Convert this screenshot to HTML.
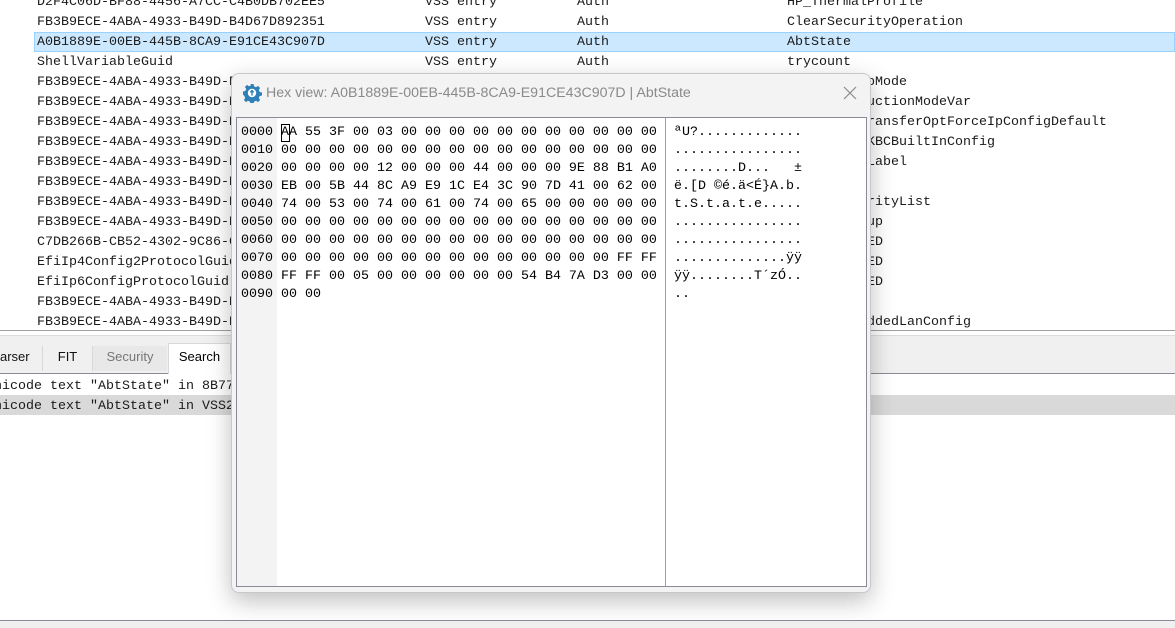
<!DOCTYPE html>
<html><head><meta charset="utf-8"><style>
*{margin:0;padding:0;box-sizing:border-box}
body{width:1175px;height:628px;overflow:hidden;background:#fff;position:relative;font-family:"Liberation Mono",monospace;font-size:13.33px;color:#1a1a1a}
.r{position:absolute;left:0;width:1175px;height:20px;line-height:20px;white-space:pre}
.r span{position:absolute;top:0}
.c1{left:37px}.c2{left:425px}.c3{left:577px}.c4{left:787px}
.sel{background:#cce8ff;border:1px solid #99d1ff;left:34px;width:1141px}
.ui{font-family:"Liberation Sans",sans-serif}
.dlg{position:absolute;left:231px;top:73px;width:640px;height:520px;background:#f3f3f3;border:1px solid #c8c8c8;border-radius:8px;box-shadow:0 8px 24px rgba(0,0,0,.25)}
.hx{position:absolute;white-space:pre;line-height:18px;font-size:13.33px;color:#000}
</style></head><body>
<div class="r" style="top:-7px"><span class="c1">D2F4C06D-BF88-4456-A7CC-C4B0DB702EE5</span><span class="c2">VSS entry</span><span class="c3">Auth</span><span class="c4">HP_ThermalProfile</span></div>
<div class="r" style="top:13px"><span class="c1">FB3B9ECE-4ABA-4933-B49D-B4D67D892351</span><span class="c2">VSS entry</span><span class="c3">Auth</span><span class="c4">ClearSecurityOperation</span></div>
<div class="r sel" style="top:32px;height:20px;line-height:20px"><span style="left:2px">A0B1889E-00EB-445B-8CA9-E91CE43C907D</span><span style="left:390px">VSS entry</span><span style="left:542px">Auth</span><span style="left:752px">AbtState</span></div>
<div class="r" style="top:53px"><span class="c1">ShellVariableGuid</span><span class="c2">VSS entry</span><span class="c3">Auth</span><span class="c4">trycount</span></div>
<div class="r" style="top:73px"><span class="c1">FB3B9ECE-4ABA-4933-B49D-B4D67D892351</span><span class="c4">xxxxxxxxxxpMode</span></div>
<div class="r" style="top:93px"><span class="c1">FB3B9ECE-4ABA-4933-B49D-B4D67D892351</span><span class="c4">xxxxxxxxxductionModeVar</span></div>
<div class="r" style="top:113px"><span class="c1">FB3B9ECE-4ABA-4933-B49D-B4D67D892351</span><span class="c4">xxxxxxxxxxransferOptForceIpConfigDefault</span></div>
<div class="r" style="top:133px"><span class="c1">FB3B9ECE-4ABA-4933-B49D-B4D67D892351</span><span class="c4">xxxxxxxxxxKBCBuiltInConfig</span></div>
<div class="r" style="top:153px"><span class="c1">FB3B9ECE-4ABA-4933-B49D-B4D67D892351</span><span class="c4">xxxxxxxxxxLabel</span></div>
<div class="r" style="top:173px"><span class="c1">FB3B9ECE-4ABA-4933-B49D-B4D67D892351</span></div>
<div class="r" style="top:193px"><span class="c1">FB3B9ECE-4ABA-4933-B49D-B4D67D892351</span><span class="c4">xxxxxxxxxxrityList</span></div>
<div class="r" style="top:213px"><span class="c1">FB3B9ECE-4ABA-4933-B49D-B4D67D892351</span><span class="c4">xxxxxxxxxxup</span></div>
<div class="r" style="top:233px"><span class="c1">C7DB266B-CB52-4302-9C86-000000000000</span><span class="c4">xxxxxxxxxxED</span></div>
<div class="r" style="top:253px"><span class="c1">EfiIp4Config2ProtocolGuid</span><span class="c4">xxxxxxxxxxED</span></div>
<div class="r" style="top:273px"><span class="c1">EfiIp6ConfigProtocolGuid</span><span class="c4">xxxxxxxxxxED</span></div>
<div class="r" style="top:293px"><span class="c1">FB3B9ECE-4ABA-4933-B49D-B4D67D892351</span></div>
<div class="r" style="top:313px"><span class="c1">FB3B9ECE-4ABA-4933-B49D-B4D67D892351</span><span class="c4">xxxxxxxxxxddedLanConfig</span></div>

<div style="position:absolute;left:0;top:330px;width:1175px;height:1px;background:#a0a0a0"></div>
<div style="position:absolute;left:0;top:335px;width:1175px;height:39px;background:#f0f0f0;border-top:1px solid #dcdcdc;border-bottom:1px solid #8a8a98"></div>
<div class="ui" style="position:absolute;left:0;top:346px;width:43px;height:25px;border-right:1px solid #d8d8d8;font-size:13px;line-height:22px;color:#111">arser</div>
<div class="ui" style="position:absolute;left:43px;top:346px;width:50px;height:25px;border-right:1px solid #d8d8d8;font-size:13px;line-height:22px;text-align:center;color:#111">FIT</div>
<div class="ui" style="position:absolute;left:93px;top:346px;width:74px;height:25px;background:#e8e8e8;font-size:13px;line-height:22px;text-align:center;color:#777">Security</div>
<div class="ui" style="position:absolute;left:168px;top:343px;width:63px;height:31px;background:#fff;border:1px solid #d8d8d8;border-bottom:none;font-size:13px;line-height:26px;text-align:center;color:#000">Search</div>
<div class="r" style="top:377px;white-space:pre"><span style="left:-6px">nicode text "AbtState" in 8B7738D0</span></div>
<div class="r" style="top:395px;background:#d9d9d9;line-height:24px"><span style="left:-6px">nicode text "AbtState" in VSS2 store</span></div>
<div style="position:absolute;left:0;top:620px;width:1175px;height:8px;background:#f0f0f0;border-top:1px solid #8a8a98"></div>

<div class="dlg">
 <svg style="position:absolute;left:10px;top:9px" width="20" height="20" viewBox="0 0 20 20"><path d="M8.5 1h3l.5 2.3 2 .9 2-1.3 2.1 2.1-1.3 2 .9 2 2.3.5v3l-2.3.5-.9 2 1.3 2-2.1 2.1-2-1.3-2 .9-.5 2.3h-3l-.5-2.3-2-.9-2 1.3-2.1-2.1 1.3-2-.9-2L1 11.5v-3l2.3-.5.9-2-1.3-2L5 1.9l2 1.3 2-.9z" fill="#2f7fb8"/><circle cx="10" cy="10" r="4.2" fill="#fff"/><path d="M10 7.5v5M8.3 9.2 10 7.5l1.7 1.7" stroke="#2f7fb8" stroke-width="1.4" fill="none"/></svg>
 <div class="ui" style="position:absolute;left:34px;top:11px;font-size:14.2px;color:#8a8a8a">Hex view: A0B1889E-00EB-445B-8CA9-E91CE43C907D | AbtState</div>
 <svg style="position:absolute;left:611px;top:12px" width="14" height="14"><path d="M1 1 13 13M13 1 1 13" stroke="#888" stroke-width="1.2"/></svg>
 <div style="position:absolute;left:4px;top:43px;width:631px;height:470px;background:#fff;border:1px solid #8a8a98">
  <div style="position:absolute;left:0;top:0;width:40px;height:468px;background:#f3f3f3"></div>
  <div style="position:absolute;left:428px;top:0;width:1px;height:468px;background:#a0a0a0"></div>
  <div class="hx" style="left:4px;top:6px">0000
0010
0020
0030
0040
0050
0060
0070
0080
0090</div>
  <div style="position:absolute;left:44px;top:6px;width:9px;height:18px;border:1px solid #000"></div>
  <div class="hx" style="left:44px;top:6px">AA 55 3F 00 03 00 00 00 00 00 00 00 00 00 00 00
00 00 00 00 00 00 00 00 00 00 00 00 00 00 00 00
00 00 00 00 12 00 00 00 44 00 00 00 9E 88 B1 A0
EB 00 5B 44 8C A9 E9 1C E4 3C 90 7D 41 00 62 00
74 00 53 00 74 00 61 00 74 00 65 00 00 00 00 00
00 00 00 00 00 00 00 00 00 00 00 00 00 00 00 00
00 00 00 00 00 00 00 00 00 00 00 00 00 00 00 00
00 00 00 00 00 00 00 00 00 00 00 00 00 00 FF FF
FF FF 00 05 00 00 00 00 00 00 54 B4 7A D3 00 00
00 00</div>
  <div class="hx" style="left:437px;top:6px">ªU?.............
................
........D...   ±
ë.[D ©é.ä&lt;É}A.b.
t.S.t.a.t.e.....
................
................
..............ÿÿ
ÿÿ........T´zÓ..
..</div>
 </div>
</div>
</body></html>
